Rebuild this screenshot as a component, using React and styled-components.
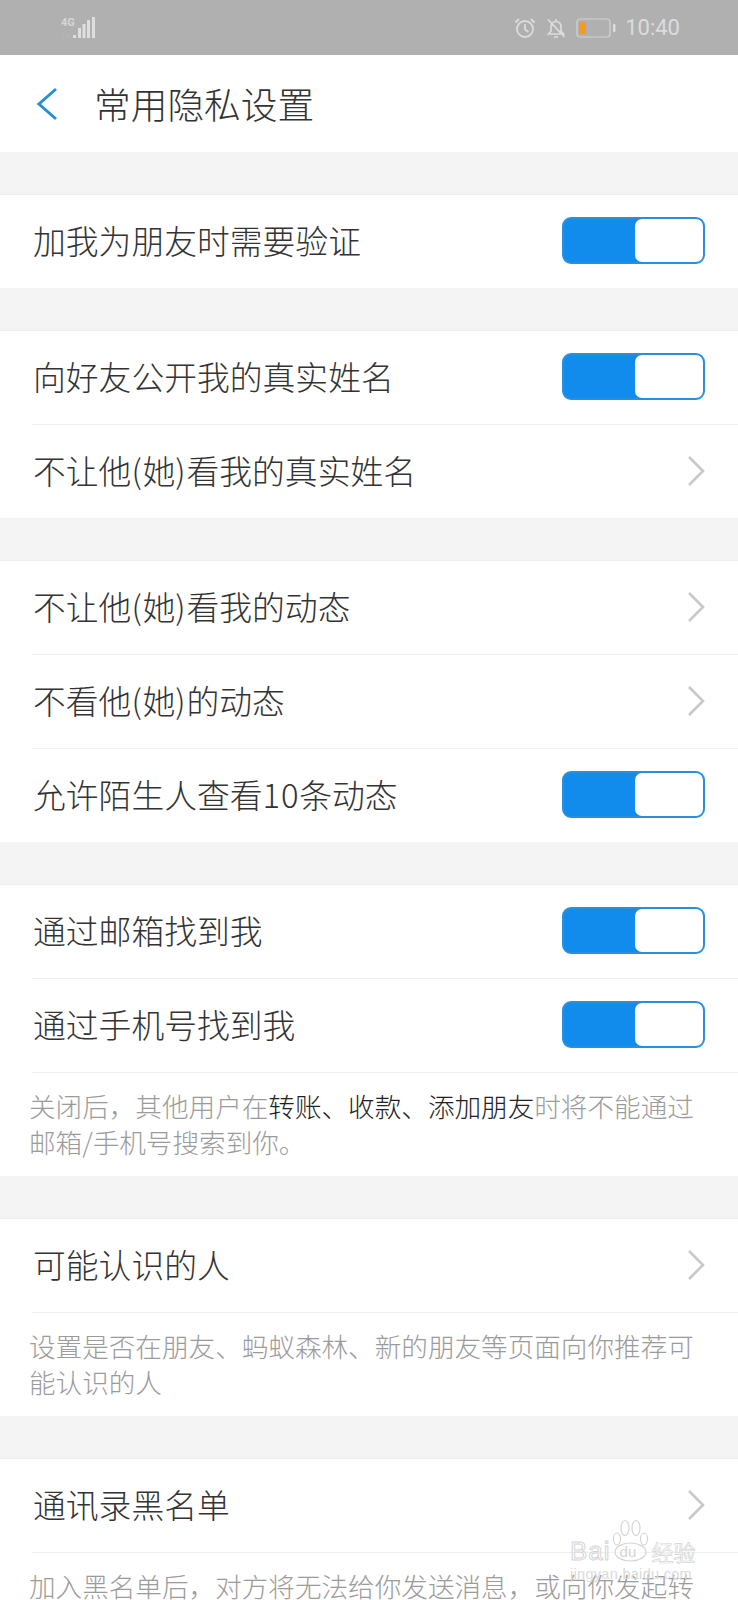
import React from "react"
import styled, { createGlobalStyle } from "styled-components"

const GlobalStyle = createGlobalStyle`
  html, body {
    margin: 0;
    padding: 0;
    background: #f4f4f4;
  }
  body {
    font-family: "Noto Sans CJK SC", "Noto Sans", sans-serif;
    font-weight: 300;
  }
`

const Page = styled.div`
  position: relative;
  width: 738px;
  height: 1600px;
  overflow: hidden;
  background: #f4f4f4;
`

const StatusBar = styled.div`
  height: 55px;
  background: #b0b0b0;
  display: flex;
  align-items: center;
  justify-content: space-between;
  padding: 0 58px 0 61px;
  box-sizing: border-box;
`

const StatusRight = styled.div`
  display: flex;
  align-items: center;
  gap: 9px;
`

const Clock = styled.span`
  font-family: "Roboto", sans-serif;
  font-weight: 400;
  font-size: 22px;
  color: #dcdcdc;
`

const Header = styled.div`
  height: 97px;
  background: #fff;
  display: flex;
  align-items: center;
  padding-left: 36px;
  gap: 36px;
  box-sizing: border-box;
`

const Title = styled.h1`
  margin: 0;
  font-size: 36.7px;
  font-weight: 300;
  color: #333;
  line-height: 1;
`

const Section = styled.section`
  margin-top: 42px;
  background: #fff;
  border-top: 1px solid #eeeeee;
`

const Row = styled.div`
  height: 91px;
  margin-left: 32px;
  padding: 0 33px 2px 0;
  display: flex;
  align-items: center;
  justify-content: space-between;
  border-top: ${({ $first }) => ($first ? "none" : "1px solid #f0f0f0")};
`

const Label = styled.span`
  margin-left: 1px;
  font-size: 32.8px;
  color: #333;
  line-height: 1;
`

// the parens and digits run a bit wider in the reference font
const Wide = styled.span`
  letter-spacing: 0.8px;
`

const Toggle = styled.div`
  width: 143px;
  height: 47px;
  box-sizing: border-box;
  border: 2px solid #2a8fdc;
  border-radius: 9px;
  background: #118cec;
  display: flex;
  justify-content: flex-end;
`

const Knob = styled.div`
  width: 68px;
  background: #fff;
  border-radius: 7px;
`

const Note = styled.p`
  margin: 0;
  padding: 15px 29px 16px;
  font-size: 26.6px;
  line-height: 36px;
  color: #9b9b9b;
`

const NoteRule = styled.div`
  margin-left: 32px;
  border-top: 1px solid #f0f0f0;
`

const Strong = styled.span`
  color: #222;
`

const Watermark = styled.div`
  position: absolute;
  left: 570px;
  top: 1519px;
  width: 132px;
  color: #d4d4d4;
`

const MarkBrand = styled.div`
  display: flex;
  align-items: flex-end;
`

const MarkLatin = styled.span`
  font-family: "Liberation Sans", sans-serif;
  font-weight: 400;
  font-size: 26px;
  line-height: 22px;
  letter-spacing: 1px;
  color: rgba(255, 255, 255, 0.4);
  -webkit-text-stroke: 1px #d4d4d4;
`

const MarkPaw = styled.div`
  position: relative;
  width: 37px;
  height: 43px;
  margin-left: 1px;
`

const MarkDu = styled.span`
  position: absolute;
  left: 8px;
  bottom: 2px;
  font-family: "Liberation Sans", sans-serif;
  font-weight: 400;
  font-size: 15px;
  line-height: 16px;
`

const MarkCn = styled.span`
  font-family: "Noto Sans CJK SC", sans-serif;
  font-weight: 400;
  font-size: 22px;
  line-height: 22px;
  margin-left: 3px;
  color: rgba(255, 255, 255, 0.4);
  -webkit-text-stroke: 0.7px #d4d4d4;
`

const MarkUrl = styled.div`
  font-family: "Liberation Sans", sans-serif;
  font-weight: 400;
  font-size: 14.5px;
  line-height: 14px;
  margin-top: 5px;
  letter-spacing: 0.3px;
  white-space: nowrap;
  color: #dadada;
`

const PawSvg = styled.svg`
  display: block;
`

const Signal = () => (
  <svg width="36" height="23" viewBox="0 0 36 23">
    <text x="0" y="10" fontSize="11" fontWeight="700" fontFamily="Roboto, sans-serif" fill="#d6d6d6">4G</text>
    <text x="0" y="22" fontSize="8" fontFamily="Roboto, sans-serif" fill="#bdbdbd">1+</text>
    <g fill="#dedede">
      <rect x="12" y="19" width="3" height="3" />
      <rect x="17" y="12" width="3" height="10" />
      <rect x="21.5" y="8" width="3" height="14" />
      <rect x="26" y="4" width="3" height="18" />
      <rect x="31" y="1" width="3" height="21" />
    </g>
  </svg>
)

const AlarmIcon = () => (
  <svg width="22" height="22" viewBox="0 0 22 22" fill="none" stroke="#dcdcdc" strokeWidth="1.8">
    <circle cx="11" cy="12" r="8" />
    <path d="M11 7v5.5l3.5 2.5M1.5 5.5 5 2M20.5 5.5 17 2" />
  </svg>
)

const MuteIcon = () => (
  <svg width="22" height="22" viewBox="0 0 22 22" fill="none" stroke="#dcdcdc" strokeWidth="1.7">
    <path d="M3.5 17h15l-2.5-3V9.5A5 5 0 0 0 11 4.5a5 5 0 0 0-5 5V14zM9 20h4M11 2v2.5M3 2.5 19.5 20" />
  </svg>
)

const BatteryIcon = () => (
  <svg width="40" height="20" viewBox="0 0 40 20">
    <rect x="1" y="1" width="33" height="18" rx="3" fill="none" stroke="#d2d2d2" strokeWidth="1.2" />
    <rect x="3" y="4" width="7" height="12" rx="2" fill="#f59a1c" />
    <rect x="37" y="6" width="2.5" height="8" rx="1" fill="#dcdcdc" />
  </svg>
)

const BackIcon = () => (
  <svg width="22" height="34" viewBox="0 0 22 34" fill="none" stroke="#2a8fd0" strokeWidth="3">
    <path d="M20 2 3 17l17 15" />
  </svg>
)

const Chevron = () => (
  <svg width="20" height="32" viewBox="0 0 20 32" fill="none" stroke="#c8c8c8" strokeWidth="2.6">
    <path d="M4 2l14 14L4 30" />
  </svg>
)

const PawIcon = () => (
  <PawSvg width="37" height="43" viewBox="0 0 37 43" fill="rgba(255,255,255,0.4)" stroke="#d4d4d4" strokeWidth="1.2">
    <ellipse cx="5" cy="20" rx="3.5" ry="6" />
    <ellipse cx="13" cy="9" rx="4" ry="7.5" />
    <ellipse cx="24" cy="9" rx="4" ry="7.5" />
    <ellipse cx="32" cy="20" rx="3.5" ry="6" />
    <ellipse cx="18.5" cy="33" rx="15.5" ry="9" />
  </PawSvg>
)

const SwitchRow = ({ first, children }) => (
  <Row $first={first}>
    <Label>{children}</Label>
    <Toggle>
      <Knob />
    </Toggle>
  </Row>
)

const LinkRow = ({ first, children }) => (
  <Row $first={first}>
    <Label>{children}</Label>
    <Chevron />
  </Row>
)

export default function App() {
  return (
    <Page>
      <GlobalStyle />
      <StatusBar>
        <Signal />
        <StatusRight>
          <AlarmIcon />
          <MuteIcon />
          <BatteryIcon />
          <Clock>10:40</Clock>
        </StatusRight>
      </StatusBar>
      <Header>
        <BackIcon />
        <Title>常用隐私设置</Title>
      </Header>

      <Section>
        <SwitchRow first>加我为朋友时需要验证</SwitchRow>
      </Section>

      <Section>
        <SwitchRow first>向好友公开我的真实姓名</SwitchRow>
        <LinkRow>
          不让他<Wide>(</Wide>她<Wide>)</Wide>看我的真实姓名
        </LinkRow>
      </Section>

      <Section>
        <LinkRow first>
          不让他<Wide>(</Wide>她<Wide>)</Wide>看我的动态
        </LinkRow>
        <LinkRow>
          不看他<Wide>(</Wide>她<Wide>)</Wide>的动态
        </LinkRow>
        <SwitchRow>
          允许陌生人查看<Wide>10</Wide>条动态
        </SwitchRow>
      </Section>

      <Section>
        <SwitchRow first>通过邮箱找到我</SwitchRow>
        <SwitchRow>通过手机号找到我</SwitchRow>
        <NoteRule />
        <Note>
          关闭后，其他用户在<Strong>转账、收款、添加朋友</Strong>时将不能通过邮箱/手机号搜索到你。
        </Note>
      </Section>

      <Section>
        <LinkRow first>可能认识的人</LinkRow>
        <NoteRule />
        <Note>设置是否在朋友、蚂蚁森林、新的朋友等页面向你推荐可能认识的人</Note>
      </Section>

      <Section>
        <LinkRow first>通讯录黑名单</LinkRow>
        <NoteRule />
        <Note>加入黑名单后，对方将无法给你发送消息，或向你发起转账</Note>
      </Section>

      <Watermark>
        <MarkBrand>
          <MarkLatin>Bai</MarkLatin>
          <MarkPaw>
            <PawIcon />
            <MarkDu>du</MarkDu>
          </MarkPaw>
          <MarkCn>经验</MarkCn>
        </MarkBrand>
        <MarkUrl>jingyan.baidu.com</MarkUrl>
      </Watermark>
    </Page>
  )
}
